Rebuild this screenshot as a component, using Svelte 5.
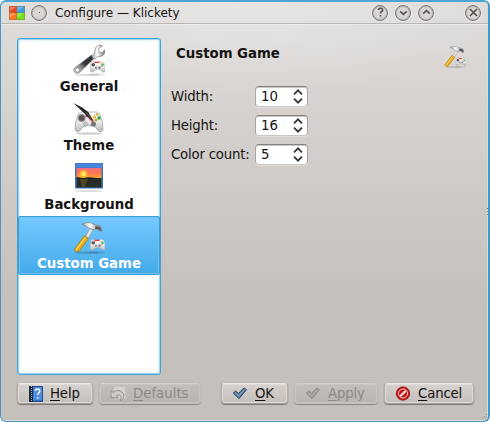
<script>
  const pages = ['General', 'Theme', 'Background', 'Custom Game'];
  let selected = $state('Custom Game');
  const fields = [
    { label: 'Width:', value: 10 },
    { label: 'Height:', value: 16 },
    { label: 'Color count:', value: 5 }
  ];
</script>

{#snippet pad()}
  <ellipse cx="24" cy="30.5" rx="9" ry="1.2" fill="#000" opacity=".12" />
  <path d="M18 18.500q2-1.500 4-.5h5q2-1 4 .5 1.500 5 1 9-2 2-4-1-1-1-3-1t-3.500 1q-2 3-4 1-1-4 .5-9z" fill="url(#padfill)" stroke="#aaa" stroke-width=".5" />
  <path d="M21.500 18.300h5" stroke="#e33" stroke-width="1.300" />
  <circle cx="20.200" cy="20.800" r="1.800" fill="#555" />
  <circle cx="23" cy="23.700" r="1.100" fill="#888" />
  <circle cx="26.500" cy="23.700" r="1.100" fill="#666" />
  <circle cx="29.500" cy="20.800" r="1.200" fill="#2db84a" />
  <circle cx="28" cy="19.600" r=".7" fill="#e5a61f" />
  <circle cx="28.800" cy="22.500" r=".6" fill="#e33" />
{/snippet}

{#snippet hammer()}
  <ellipse cx="14" cy="30.600" rx="12" ry="1.100" fill="#000" opacity=".16" />
  <path d="M12.500 14.500L17 6.500l2.800 1.600-4.500 8.200z" fill="#e4e4e4" stroke="#888" stroke-width=".5" />
  <path d="M11.300 13.800l4.200 2.700L6 29.500q-2.500 1-4.900-1.700z" fill="#e8aa16" stroke="#a87508" stroke-width=".7" />
  <path d="M12.400 15.300L3 28" stroke="#ffe272" stroke-width="1.200" />
  <path d="M9 2.300q4.500-3 9.300-1.300l3.200 1.700 5 1q2.300 1.500 2.300 5.600l-3.200-.7-1.200-1.300-4.600.2-3.600-1.300q-3.200-2.300-7.200-3.900z" fill="url(#steel)" stroke="#777" stroke-width=".6" />
  <path d="M22.500 4l3.900.9 1.800 3.800-3.100-1.600-3-.2z" fill="#555" />
{/snippet}

{#snippet pageIcon(name)}
  <svg width="32" height="32" viewBox="0 0 32 32">
    {#if name === 'General'}
      <ellipse cx="14" cy="31" rx="12" ry="1" fill="#000" opacity=".13" />
      <path d="M1.500 24L18.500 11l3 3L6.800 28.300q-2.300 2.200-4.800.4-2.600-2.100-.5-4.700z" fill="url(#handle)" stroke="#777" stroke-width=".5" />
      <path d="M18.800 12.800q1.700-1.800 2.700-3.600.2-6 3.300-7.700 2.600-1.100 4.700.2l-3.800 3.300.5 2.800 2.700.8 3-2.800q.5 4.700-2.500 6.200-3 1-4.900.7L22 14.900q-1.800.5-3.200-2.100z" fill="url(#steel)" stroke="#777" stroke-width=".6" />
      <circle cx="4.300" cy="26" r="2" fill="#fff" stroke="#999" stroke-width=".8" />
      {@render pad()}
    {:else if name === 'Theme'}
      <ellipse cx="16" cy="30.500" rx="13" ry="1.300" fill="#000" opacity=".18" />
      <path d="M5.500 10.500q2.500-2.300 6-1.500h9q3.500-.8 6 1.500 3.800 7.500 3.500 15.500-.7 4-4 2.300-2-1.300-3.200-3.800-2.300-1.800-6.800-1.800t-6.800 1.800q-1.200 2.500-3.200 3.800-3.300 1.700-4-2.300-.3-8 3.500-15.500z" fill="url(#padfill)" stroke="#999" stroke-width=".7" />
      <circle cx="8.700" cy="15" r="4" fill="#909090" /><circle cx="8.700" cy="15" r="2.800" fill="#555" />
      <circle cx="12.500" cy="21" r="2" fill="#ccc" stroke="#999" stroke-width=".7" /><circle cx="20.500" cy="21" r="2.500" fill="#777" />
      <circle cx="21.500" cy="14" r="1.500" fill="#e8b928" /><circle cx="24" cy="11.500" r="1.400" fill="#d8b944" />
      <circle cx="26" cy="15" r="1.700" fill="#2e9d37" /><circle cx="23" cy="17" r="1.400" fill="#c7a430" />
      <path d="M12.500 12.500l2.500 1.300M16 15l4 4" stroke="#e34b50" stroke-width="1.600" />
      <path d="M.3 0Q9 3.500 15.200 9l1.800 3 4 6.500-6.500-4.500-3-3.500z" fill="#242424" />
      <path d="M13 9.500l5 5.500" stroke="#777" stroke-width=".8" />
    {:else if name === 'Background'}
      <ellipse cx="16" cy="29" rx="14" ry="1" fill="#000" opacity=".14" />
      <path d="M2 1h28v25.500H2z" fill="#3d72c9" />
      <path d="M2.500 1.500h27v4h-27z" fill="#4b86dc" />
      <path d="M3.500 6h25v11h-25z" fill="url(#sky)" />
      <path d="M3.500 16h25v9.500h-25z" fill="#282c24" />
      <path d="M7 17h8l-3 8H9z" fill="#9b7a20" opacity=".35" />
      <path d="M3.500 15l5 .8 8-.5 12 1.200H3.500z" fill="#172031" />
      <circle cx="10.500" cy="12" r="4" fill="#ffcf30" opacity=".65" /><circle cx="10.500" cy="12" r="2" fill="#fff45b" />
    {:else}
      {@render hammer()}
      {@render pad()}
    {/if}
  </svg>
{/snippet}

{#snippet check()}
  <svg width="16" height="16" viewBox="0 0 16 16"><path d="M1.300 7l2.300-1.900L6.500 7.300 12 1.900l2.500 1.800L7 12.700z" fill="#587da3" stroke="#2d4660" stroke-linejoin="round" /><path d="M3.200 6.800L6.700 9.700 12.500 3.600" fill="none" stroke="#91aeca" stroke-width=".8" /></svg>
{/snippet}

<svg class="defs" width="0" height="0" aria-hidden="true">
  <defs>
    <linearGradient id="padfill" x2="0" y2="1"><stop stop-color="#fff" /><stop offset=".5" stop-color="#eaeaea" /><stop offset="1" stop-color="#b8b8b8" /></linearGradient>
    <linearGradient id="steel"><stop stop-color="#999" /><stop offset=".4" stop-color="#fff" /><stop offset="1" stop-color="#777" /></linearGradient>
    <linearGradient id="handle" x1="0" y1="1" x2="1" y2="0"><stop stop-color="#ddd" /><stop offset=".35" stop-color="#888" /><stop offset=".55" stop-color="#333" /><stop offset="1" stop-color="#333" /></linearGradient>
    <linearGradient id="sky" x2="0" y2="1"><stop stop-color="#f06e82" /><stop offset=".5" stop-color="#ff7a4d" /><stop offset="1" stop-color="#ffae28" /></linearGradient>
  </defs>
</svg>

<div class="window">
  <header>
    <svg class="logo" width="16" height="14" viewBox="0 0 16 14">
      <path d="M0 0h16v14H0z" fill="#9b7842" /><path d="M.5.500h7v6h-7z" fill="#e94320" /><path d="M8 .500h7.500v6H8z" fill="#359dea" /><path d="M.5 7h7v6.500h-7z" fill="#ff7626" /><path d="M8 7h7.500v6.500H8z" fill="#6de516" /><path d="M1 1h6L1 5zM8.500 1h6l-6 4zM8.500 7.500h6l-6 4zM1 7.500h6l-6 4z" fill="#fff" opacity=".3" />
    </svg>
    <span class="round menu"><i></i></span>
    <h1>Configure — Klickety</h1>
    <div class="controls">
      <span class="round"><svg width="15" height="15" viewBox="0 0 15 15"><path d="M5.300 5q.2-1.700 2.200-1.700T9.700 5q0 1.200-1.200 1.800-1 .5-1 1.700M7.500 10v1.500" /></svg></span>
      <span class="round"><svg width="15" height="15" viewBox="0 0 15 15"><path d="M4.200 6.300l3.300 3 3.300-3" /></svg></span>
      <span class="round"><svg width="15" height="15" viewBox="0 0 15 15"><path d="M4.200 8.700l3.300-3 3.300 3" /></svg></span>
      <span class="round close"><svg width="15" height="15" viewBox="0 0 15 15"><path d="M4 4l7 7M11 4l-7 7" /></svg></span>
    </div>
  </header>

  <div class="body">
    <nav>
      {#each pages as page}
        <div class="page" class:selected={page === selected}>
          {@render pageIcon(page)}
          <span>{page}</span>
        </div>
      {/each}
    </nav>
    <main>
      <div class="heading">
        <h2>Custom Game</h2>
        <svg width="22" height="22" viewBox="0 0 32 32">{@render hammer()}{@render pad()}</svg>
      </div>
      {#each fields as field}
        <div class="field">
          <span class="label">{field.label}</span>
          <div class="spin"><span>{field.value}</span><svg width="10" height="15" viewBox="0 0 10 15"><path d="M1 5.300L5 1.300l4 4M1 9.700l4 4 4-4" /></svg></div>
        </div>
      {/each}
    </main>
  </div>

  <footer>
    <div class="button help">
      <svg width="16" height="16" viewBox="0 0 16 16"><path d="M1.500.500h13v15h-13z" fill="#3470c8" stroke="#234c88" /><path d="M1 0h4v16H1z" fill="#1c2d43" /><path d="M3.500 0v16" stroke="#9aabc0" stroke-dasharray="1 1" /><path d="M5.500 1h8.500v13H5.500z" fill="#4d8de0" /><path d="M7.300 5q.2-2 2.300-2t2.200 2q0 1.200-1.200 2-.9.700-.9 2M9.700 11v1.700" fill="none" stroke="#fff" stroke-width="1.400" /></svg>
      <span><u>H</u>elp</span>
    </div>
    <div class="button defaults disabled">
      <svg width="16" height="16" viewBox="0 0 16 16"><path d="M4 .500h11.500v12.500H4z" fill="#d6d4d2" stroke="#c5c2c0" /><path d="M1 4.500l2.300 2Q6 3.500 10 4.800q4.500 1.800 3.700 6.500-.5 2-3.200 3.500 1.500-4.500-.5-5.700-2-1.100-3.800.5l2.100 2.100H1z" fill="#d0cdca" stroke="#96928f" /></svg>
      <span><u>D</u>efaults</span>
    </div>
    <div class="button ok">{@render check()}<span><u>O</u>K</span></div>
    <div class="button apply disabled">{@render check()}<span><u>A</u>pply</span></div>
    <div class="button cancel">
      <svg width="16" height="16" viewBox="0 0 16 16"><circle cx="8" cy="7.500" r="6.700" fill="#c31414" stroke="#8c1010" stroke-width=".7" /><circle cx="8" cy="7.500" r="4.500" fill="none" stroke="#edcfcb" stroke-width="1" /><path d="M5.200 10.300l5.600-5.600" stroke="#efd9d6" stroke-width="2.300" /></svg>
      <span><u>C</u>ancel</span>
    </div>
  </footer>
  <i class="grip side"></i>
  <svg class="corner" width="6" height="6" viewBox="0 0 6 6"><path d="M4 0h1v1H4zM4 3h1v1H4zM2 2h1v1H2zM0 4h1v1H0zM3 5h1v1H3z" /></svg>
</div>

<style>
  :global(body) { margin: 0; background: #fff; overflow: hidden; }
  .defs { position: absolute; }
  .window { position: relative; box-sizing: border-box; width: 490px; height: 422px; overflow: hidden; border: 1px solid #4599c4; border-top: 2px solid #4aa6d4; border-right-width: 2px; border-radius: 6px; background: radial-gradient(ellipse 260px 95px at 50% 0, #eeedec90, #eeedec00), linear-gradient(#dfdddc, #d7d3d0 95px, #cec9c6 200px, #c6c0bc 300px); box-shadow: inset -1px -1px #ddd9d6; color: #161412; font: 13.300px "DejaVu Sans", sans-serif; display: flex; flex-direction: column; }
  header { height: 22px; flex: none; display: flex; align-items: center; padding-left: 8px; box-sizing: border-box; border-bottom: 1px solid #b9b5b2; box-shadow: 0 1px #eeecea; }
  .logo { margin-right: 6px; }
  h1 { font: 12px "DejaVu Sans", sans-serif; margin: 0 0 0 8px; }
  .round { box-sizing: border-box; width: 16px; height: 16px; flex: none; border: 1.500px solid #777371; border-radius: 50%; box-shadow: 0 0 0 1px #f3f2f180, inset 0 0 0 1px #bbb7b5; background: #d9d6d4; display: flex; align-items: center; justify-content: center; }
  .round svg { flex: none; fill: none; stroke: #55514f; stroke-width: 1.600; }
  .menu i { width: 1px; height: 1px; background: #555; }
  .controls { display: flex; gap: 7px; margin-left: auto; margin-right: 7px; }
  .close { margin-left: 24px; }
  .body { display: flex; height: 337px; margin-top: 14px; padding-left: 16px; flex: none; }
  nav { box-sizing: border-box; width: 144px; border: 1px solid #37a4dc; border-radius: 3px; background: #fff; box-shadow: inset 0 0 0 1px #a5d7ef, inset 0 0 2px 2px #e4f2f9; }
  .page { box-sizing: border-box; height: 59px; padding-top: 5px; display: flex; flex-direction: column; align-items: center; font: bold 13.300px/17px "DejaVu Sans", sans-serif; }
  .page svg { flex: none; margin-bottom: 2px; }
  .selected { color: #fff; border: 1px solid #3a9ed7; border-radius: 2px; background: linear-gradient(#76c9ff, #43aae8); box-shadow: inset 0 0 0 1px #70bfef; }
  .selected svg { margin-bottom: 1px; }
  main { width: 312px; padding-left: 10px; }
  .heading { display: flex; height: 48px; }
  h2 { margin: 7px 0 0 5px; font: bold 13.300px/17px "DejaVu Sans", sans-serif; width: 268px; }
  .heading svg { margin-top: 8px; }
  .field { height: 21px; display: flex; align-items: center; margin-bottom: 8px; }
  .label { width: 84px; white-space: nowrap; letter-spacing: -.2px; }
  .spin { box-sizing: border-box; width: 53px; height: 21px; background: #fff; border: 1px solid #aaa5a2; border-top-color: #85817e; border-bottom-color: #c8c5c2; border-radius: 4px; display: flex; align-items: center; justify-content: space-between; padding: 0 4px 0 5px; box-shadow: 0 1px #e0ddda, inset 0 1px #c9c7c5; }
  .spin path { fill: none; stroke: #393735; stroke-width: 1.800; }
  footer { display: flex; padding: 8px 0 0 16px; }
  .button { box-sizing: border-box; height: 21px; border: 1px solid #b3aeaa; border-top-color: #eceae8; border-bottom-color: #a39d99; border-radius: 4px; background: linear-gradient(#d6d2cf, #c4bfbb); box-shadow: 0 1px 1px #7d7773, 0 0 1px #8d8783, inset 0 0 0 1px #dedbd8; display: flex; align-items: center; gap: 6px; padding-left: 10px; line-height: 16px; white-space: nowrap; letter-spacing: -.15px; }
  .button u { text-underline-offset: 2px; text-decoration-thickness: 1px; }
  .button svg { flex: none; }
  .help { width: 76px; }
  .defaults { width: 102px; margin-left: 6px; }
  .defaults span { letter-spacing: 0; margin-left: 1px; }
  .ok { width: 67px; margin-left: 20px; }
  .ok span, .apply span { margin-left: 1px; }
  .apply { width: 84px; margin-left: 6px; }
  .cancel { width: 90px; margin-left: 6px; }
  .cancel span { margin-left: 1px; }
  .disabled { color: #8d8986; background: linear-gradient(#c4bfbc, #b9b4b0); border-color: #c2bdb9; border-top-color: #d5d1ce; box-shadow: 0 1px 1px #8d8783, 0 0 1px #a19b97, inset 0 0 0 1px #c8c4c1; }
  .apply svg { filter: grayscale(1); opacity: .4; }
  .side { position: absolute; right: 0; top: 206px; width: 1px; height: 7px; background: repeating-linear-gradient(#8a8581 0 1px, #0000 1px 3px); }
  .corner { position: absolute; right: 0; bottom: 1px; fill: #8a8581; }
</style>
